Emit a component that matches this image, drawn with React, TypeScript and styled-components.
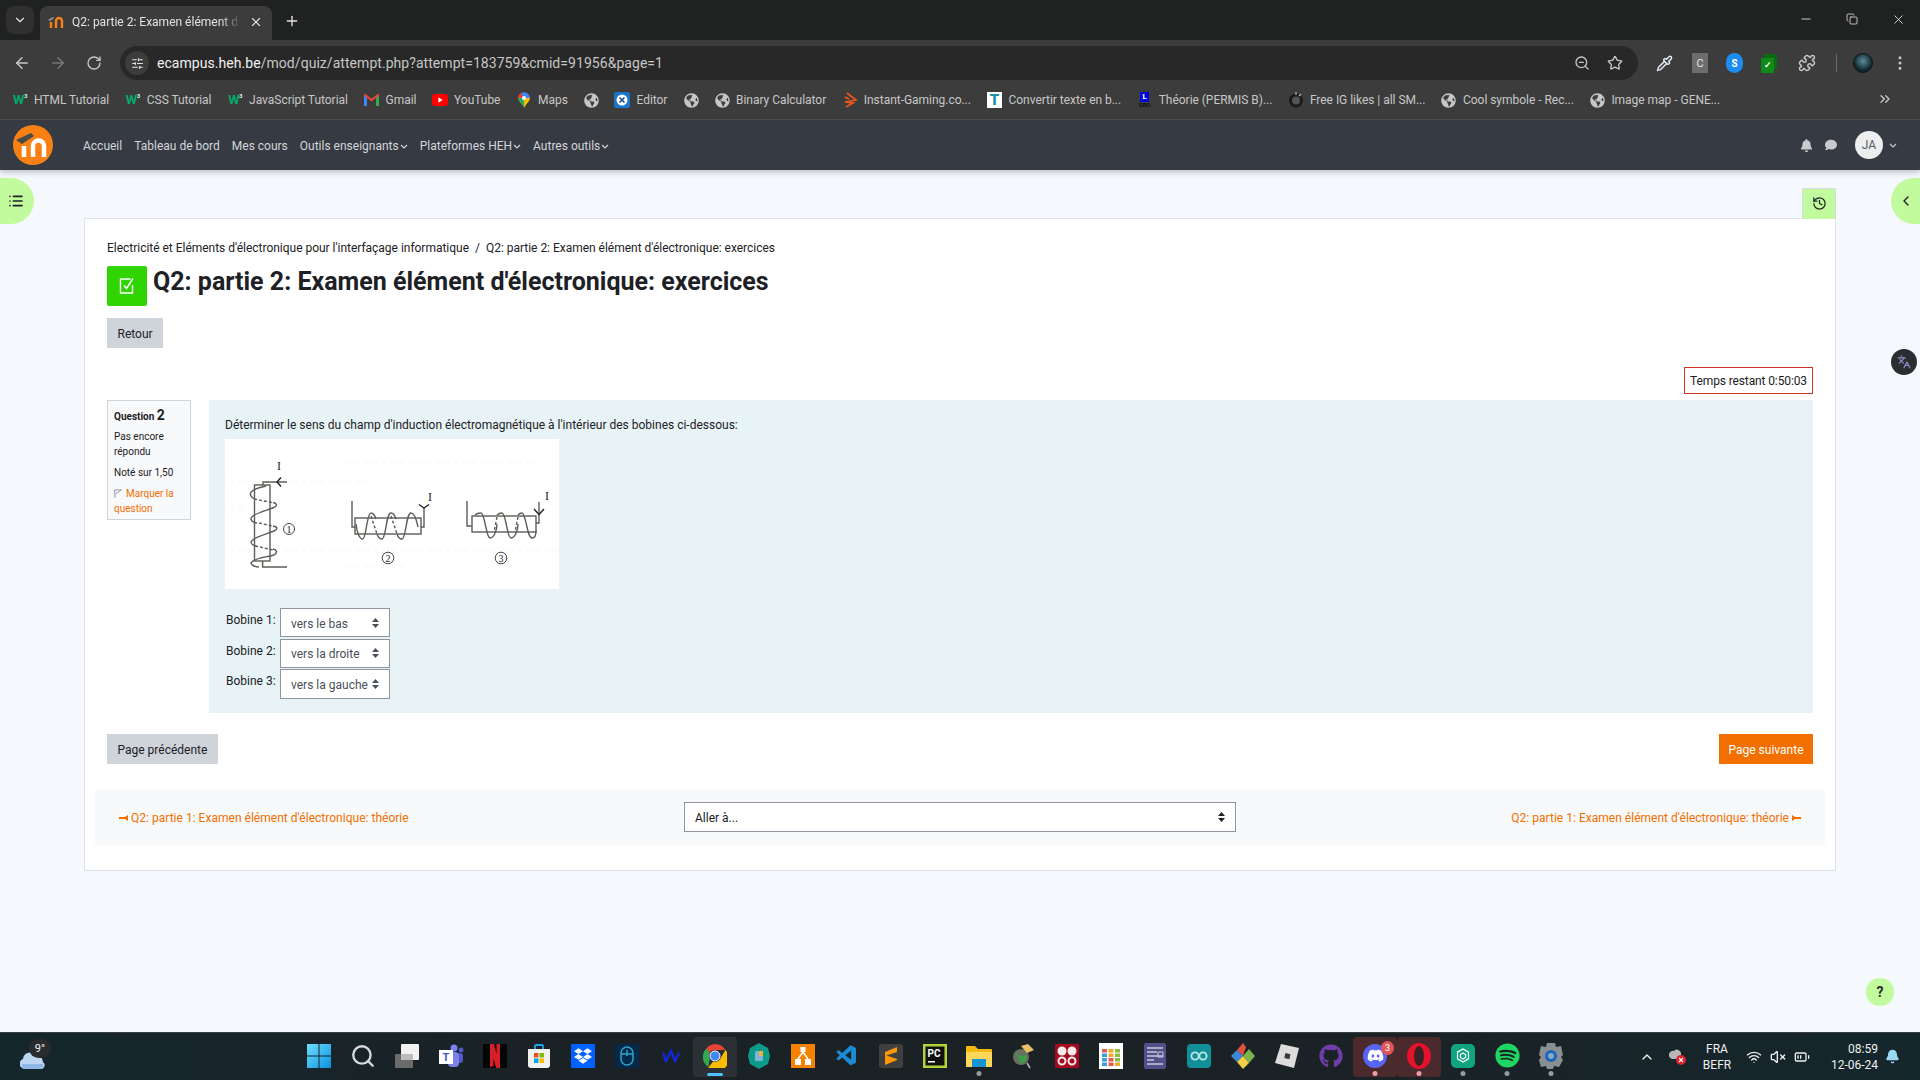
// App.tsx
import React from 'react';
import styled, { createGlobalStyle } from 'styled-components';
import {
  FaDiscord,
  FaGithub,
  FaGlobeAmericas,
  FaSpotify,
  FaDropbox,
  FaBell,
  FaComment,
} from 'react-icons/fa';
import { VscVscode } from 'react-icons/vsc';
import {
  ArrowLeft,
  ArrowRight,
  RotateCw,
  ChevronDown,
  ChevronLeft,
  Plus,
  X,
  Minus,
  Search,
  ZoomOut,
  Star,
  EllipsisVertical,
  ChevronsRight,
  ChevronUp,
  History,
  Wifi,
  VolumeX,
  BatteryMedium,
  Bell,
  Copy,
  Puzzle,
  Pipette,
  SlidersHorizontal,
  Languages,
  List,
} from 'lucide-react';

const GlobalStyle = createGlobalStyle`
  html, body { margin: 0; padding: 0; }
  body {
    font-family: Roboto, "Liberation Sans", sans-serif;
    font-size: 12px;
    color: #1d2125;
    background: #f5f8fc;
  }
  * { box-sizing: border-box; }
`;

const Screen = styled.div`
  width: 1920px;
  height: 1080px;
  display: flex;
  flex-direction: column;
  overflow: hidden;
  position: relative;
`;

/* ---------- browser chrome ---------- */
const TabStrip = styled.div`
  height: 40px;
  flex: none;
  background: #202221;
  display: flex;
  align-items: flex-end;
  padding-left: 6px;
  color: #e3e3e3;
`;
const TabMenu = styled.div`
  width: 28px;
  height: 28px;
  margin-bottom: 6px;
  border-radius: 8px;
  background: #2f302f;
  display: flex;
  align-items: center;
  justify-content: center;
`;
const Tab = styled.div`
  width: 232px;
  height: 34px;
  margin-left: 6px;
  border-radius: 8px 8px 0 0;
  background: #3c3c3c;
  display: flex;
  align-items: center;
  padding: 0 9px 3px 8px;
  gap: 8px;
`;
const TabTitle = styled.span`
  flex: 1;
  white-space: nowrap;
  font-size: 12px;
  -webkit-mask-image: linear-gradient(to right, #000 88%, transparent);
  mask-image: linear-gradient(to right, #000 88%, transparent);
`;
const NewTab = styled.div`
  margin: 0 0 11px 12px;
  display: flex;
`;
const WindowControls = styled.div`
  margin-left: auto;
  height: 40px;
  display: flex;
  align-items: center;
  gap: 33px;
  padding-right: 14px;
  padding-bottom: 2px;
`;

const Toolbar = styled.div`
  height: 47px;
  flex: none;
  background: #3c3c3c;
  display: flex;
  align-items: flex-start;
  padding-top: 6px;
  color: #c7c7c7;
`;
const NavButtons = styled.div`
  width: 120px;
  height: 34px;
  flex: none;
  display: flex;
  align-items: center;
  padding-left: 13px;
  gap: 18px;
`;
const Reload = styled(RotateCw)`
  margin-left: 1px;
`;
const Omnibox = styled.div`
  width: 1518px;
  height: 34px;
  flex: none;
  border-radius: 17px;
  background: #282828;
  display: flex;
  align-items: center;
  padding: 0 15px 0 5px;
`;
const SiteInfo = styled.div`
  width: 24px;
  height: 24px;
  border-radius: 50%;
  background: #3c3c3c;
  display: flex;
  align-items: center;
  justify-content: center;
  margin-right: 8px;
`;
const Url = styled.div`
  flex: 1;
  font-size: 14px;
  letter-spacing: 0.05px;
  color: #c4c7c5;
  b {
    font-weight: 400;
    color: #f1f1f1;
  }
`;
const OmniActions = styled.div`
  display: flex;
  align-items: center;
  gap: 17px;
`;
const Extensions = styled.div`
  flex: 1;
  height: 34px;
  display: flex;
  align-items: center;
  padding-left: 18px;
  gap: 18px;
`;
const ToolbarDivider = styled.div`
  width: 1px;
  height: 18px;
  background: #6a6a6a;
  margin: 0 -2px 0 2px;
`;
const GrayChip = styled.div`
  width: 16px;
  height: 20px;
  margin-left: 1px;
  background: #6d6d6d;
  color: #e5e5e5;
  font-size: 11px;
  display: flex;
  align-items: center;
  justify-content: center;
  border-radius: 1px;
`;
const ShieldBadge = styled.div`
  width: 17px;
  height: 20px;
  border-radius: 9px;
  background: #1d8cf0;
  color: #fff;
  font-size: 10px;
  font-weight: 700;
  display: flex;
  align-items: center;
  justify-content: center;
`;
const CheckBadge = styled.div`
  width: 13px;
  height: 15px;
  margin: 4px 3px 0 0;
  background: #0e8a16;
  color: #fff;
  font-size: 9px;
  font-weight: 700;
  display: flex;
  align-items: center;
  justify-content: center;
  box-shadow: 3px -4px 0 #0b6b12;
`;
const ExtensionsPuzzle = styled(Puzzle)`
  margin-left: 3px;
`;
const ProfileDot = styled.div`
  width: 20px;
  height: 20px;
  border-radius: 50%;
  background: radial-gradient(circle at 50% 40%, #5d8b98, #10262c 65%);
  border: 1px solid #0c1315;
`;

const Bookmarks = styled.div`
  height: 33px;
  flex: none;
  background: #3c3c3c;
  border-bottom: 1px solid #4b4b4b;
  display: flex;
  align-items: flex-start;
  padding: 5px 0 0 12px;
  color: #c7c7c7;
  position: relative;
`;
const Bookmark = styled.div<{ $gap?: number }>`
  display: flex;
  align-items: center;
  gap: 6px;
  height: 16px;
  margin-right: ${(p) => p.$gap ?? 15.6}px;
  white-space: nowrap;
  font-size: 12px;
  letter-spacing: -0.03px;
  line-height: 16px;
`;
const BookmarkIcon = styled.span`
  width: 16px;
  height: 16px;
  flex: none;
  display: flex;
  align-items: center;
  justify-content: center;
`;
const W3 = styled.span`
  color: #04aa6d;
  font-weight: 700;
  font-size: 13px;
  letter-spacing: -0.5px;
  sup {
    font-size: 6px;
    color: #cfe;
    vertical-align: 6px;
    line-height: 0;
  }
`;
const Overflow = styled.div`
  position: absolute;
  left: 1877px;
  top: 4px;
`;
const SquareT = styled.span`
  width: 15px;
  height: 16px;
  background: #fff;
  color: #1d90a8;
  font-size: 15px;
  font-weight: 900;
  line-height: 16px;
  text-align: center;
`;
const Permis = styled.span`
  display: flex;
  flex-direction: column;
  align-items: center;
  line-height: 1;
  i {
    width: 9px;
    height: 10px;
    background: #0000dc;
    color: #fff;
    font: 700 8px/10px Roboto, sans-serif;
    text-align: center;
  }
  u {
    text-decoration: none;
    color: #111;
    font: 700 6px/6px Roboto, sans-serif;
  }
`;

/* ---------- moodle nav ---------- */
const MoodleBar = styled.div`
  height: 50px;
  flex: none;
  background: #353a43;
  box-shadow: 0 2px 6px rgba(60, 70, 90, 0.35);
  display: flex;
  align-items: center;
  padding: 0 23px 0 13px;
  color: #d4d6d9;
  position: relative;
  z-index: 2;
`;
const NavLinks = styled.nav`
  display: flex;
  gap: 12px;
  margin-left: 30px;
  padding-top: 2px;
  font-size: 12px;
`;
const NavLink = styled.span`
  display: inline-flex;
  align-items: center;
  gap: 1px;
`;
const NavRight = styled.div`
  margin-left: auto;
  display: flex;
  align-items: center;
  color: #c8cacd;
`;
const ChatIcon = styled(FaComment)`
  margin-left: 12px;
`;
const Avatar = styled.div`
  width: 28px;
  height: 28px;
  border-radius: 50%;
  background: #eceef0;
  color: #555b63;
  font-size: 12px;
  display: flex;
  align-items: center;
  justify-content: center;
  margin: 0 6px 0 18px;
`;

/* ---------- page ---------- */
const Page = styled.main`
  flex: 1;
  background: #f5f8fc;
  padding: 48px 84px 0;
  position: relative;
`;
const Pill = styled.div<{ $side: 'left' | 'right' }>`
  position: absolute;
  top: 8px;
  ${(p) => p.$side}: 0;
  width: ${(p) => (p.$side === 'left' ? 34 : 29)}px;
  height: 46px;
  background: #c2fa9e;
  border-radius: ${(p) => (p.$side === 'left' ? '0 23px 23px 0' : '23px 0 0 23px')};
  display: flex;
  align-items: center;
  justify-content: center;
  color: #1d2125;
  padding-right: ${(p) => (p.$side === 'left' ? 3 : 0)}px;
`;
const HistoryTab = styled.div`
  position: absolute;
  top: 18px;
  left: 1802px;
  width: 34px;
  height: 31px;
  background: #c2fa9e;
  border: 1px solid #d5dae1;
  border-bottom: 0;
  padding-bottom: 2px;
  display: flex;
  align-items: center;
  justify-content: center;
  color: #1d2125;
`;
const TranslateBadge = styled.div`
  position: absolute;
  left: 1891px;
  top: 179px;
  width: 26px;
  height: 26px;
  border-radius: 50%;
  background: #2c2d30;
  color: #8c90c8;
  display: flex;
  align-items: center;
  justify-content: center;
`;
const HelpButton = styled.div`
  position: absolute;
  left: 1866px;
  top: 808px;
  width: 28px;
  height: 28px;
  border-radius: 50%;
  background: #c2fa9e;
  color: #2c2c2c;
  font-size: 14px;
  font-weight: 700;
  display: flex;
  align-items: center;
  justify-content: center;
`;
const Card = styled.section`
  background: #fff;
  border: 1px solid #dee2e6;
  padding: 19px 22px 24px;
  height: 653px;
`;
const Crumbs = styled.div`
  display: flex;
  gap: 6px;
  line-height: 20px;
  font-size: 12px;
  letter-spacing: -0.02px;
  color: #1d2125;
`;
const TitleRow = styled.div`
  display: flex;
  gap: 6px;
  align-items: flex-start;
  margin-top: 8px;
`;
const ActivityIcon = styled.div`
  width: 40px;
  height: 40px;
  border-radius: 2px;
  background: #30d400;
  color: #fff;
  display: flex;
  align-items: center;
  justify-content: center;
`;
const Title = styled.h1`
  margin: 0;
  font-size: 25px;
  line-height: 32px;
  font-weight: 700;
  color: #1d2125;
`;
const Button = styled.div<{ $primary?: boolean }>`
  height: 30px;
  display: inline-flex;
  align-items: center;
  padding: 1px ${(p) => (p.$primary ? 9.5 : 10.5)}px 0;
  font-size: 12px;
  background: ${(p) => (p.$primary ? '#f26f00' : '#ced4da')};
  color: ${(p) => (p.$primary ? '#fff' : '#1d2125')};
`;
const BackRow = styled.div`
  margin-top: 12px;
  display: flex;
`;
const TimerRow = styled.div`
  display: flex;
  justify-content: flex-end;
  margin-top: 19px;
`;
const Timer = styled.div`
  height: 27px;
  width: 129px;
  border: 1px solid #ca3120;
  display: flex;
  align-items: center;
  justify-content: center;
  font-size: 12px;
  letter-spacing: -0.12px;
`;
const QuestionRow = styled.div`
  display: flex;
  gap: 18px;
  margin-top: 6px;
  align-items: flex-start;
`;
const Info = styled.aside`
  width: 84px;
  flex: none;
  height: 120px;
  background: #f8f9fa;
  border: 1px solid #ced4da;
  padding: 5px 6px;
  font-size: 10px;
  line-height: 15px;
  p {
    margin: 0 0 6px;
  }
`;
const QuestionNo = styled.div`
  font-weight: 700;
  font-size: 10px;
  line-height: 18px;
  margin-bottom: 3px;
  span {
    font-size: 14px;
  }
`;
const FlagLink = styled.div`
  color: #f26f00;
  svg {
    vertical-align: -1px;
    margin-right: 4px;
  }
`;
const Content = styled.div`
  flex: 1;
  height: 313px;
  background: #e7f3f5;
  padding: 15px 16px 14px;
`;
const QText = styled.div`
  line-height: 20px;
  font-size: 12px;
`;
const Figure = styled.div`
  margin-top: 4px;
  width: 334px;
  height: 150px;
  background: #fff;
  svg {
    display: block;
  }
`;
const Answers = styled.div`
  margin-top: 19px;
  display: flex;
  flex-direction: column;
  gap: 1.5px;
`;
const AnswerRow = styled.div`
  display: flex;
  align-items: flex-start;
  gap: 4px;
  padding-left: 1px;
`;
const AnswerLabel = styled.span`
  line-height: 24px;
  width: 50px;
  font-size: 12px;
`;
const SelectBox = styled.div<{ $width: number; $height: number }>`
  width: ${(p) => p.$width}px;
  height: ${(p) => p.$height}px;
  background: #fff;
  border: 1px solid #8f959e;
  color: #495057;
  font-size: 12px;
  display: flex;
  align-items: center;
  justify-content: space-between;
  padding: 2px 10px 0;
`;
const Caret = styled.svg`
  flex: none;
  margin-top: -2px;
`;
const PageButtons = styled.div`
  display: flex;
  justify-content: space-between;
  margin-top: 21px;
`;
const ActivityNav = styled.div`
  margin: 25px -12px 0;
  height: 56px;
  background: #f8f9fa;
  display: flex;
  align-items: center;
  justify-content: space-between;
  padding: 0 24px;
`;
const ActivityLink = styled.span<{ $end?: boolean }>`
  color: #f26f00;
  font-size: 12px;
  letter-spacing: 0.02px;
  display: inline-flex;
  align-items: center;
  justify-content: ${(p) => (p.$end ? 'flex-end' : 'flex-start')};
  gap: 3px;
  width: 320px;
  padding-top: 1px;
  white-space: nowrap;
`;
const JumpBox = styled(SelectBox)`
  color: #1d2125;
`;

/* ---------- taskbar ---------- */
const Taskbar = styled.footer`
  height: 48px;
  flex: none;
  background: linear-gradient(90deg, #14272c 0%, #1b2226 30%, #1b2226 70%, #14272c 100%);
  border-top: 1px solid #3a3f42;
  display: flex;
  align-items: center;
  color: #f0f0f0;
`;
const Weather = styled.div`
  width: 297px;
  flex: none;
  height: 100%;
  position: relative;
  padding: 14px 0 0 20px;
`;
const WeatherBadge = styled.span`
  position: absolute;
  left: 29px;
  top: 6px;
  width: 22px;
  height: 19px;
  border-radius: 10px;
  background: #2a2b2c;
  font-size: 11px;
  text-align: center;
  line-height: 19px;
`;
const Apps = styled.div`
  display: flex;
  height: 100%;
  align-items: center;
`;
const AppCell = styled.div<{ $bg?: string; $dot?: string; $bar?: boolean }>`
  width: 44px;
  height: 40px;
  flex: none;
  border-radius: 4px;
  position: relative;
  display: flex;
  align-items: center;
  justify-content: center;
  padding-bottom: 2px;
  background: ${(p) => p.$bg ?? 'transparent'};
  &::after {
    content: '';
    display: ${(p) => (p.$dot || p.$bar ? 'block' : 'none')};
    position: absolute;
    bottom: 1px;
    left: 50%;
    transform: translateX(-50%);
    width: ${(p) => (p.$bar ? 16 : 5)}px;
    height: ${(p) => (p.$bar ? 3 : 5)}px;
    border-radius: 3px;
    background: ${(p) => p.$dot ?? '#4cc2ff'};
  }
`;
const DiscordCount = styled.span`
  position: absolute;
  top: 4px;
  right: 3px;
  width: 13px;
  height: 14px;
  border-radius: 50%;
  background: #e0555a;
  color: #fff;
  font-size: 9px;
  text-align: center;
  line-height: 14px;
`;
const Tile = styled.div<{ $bg: string; $color?: string; $radius?: number }>`
  width: 24px;
  height: 24px;
  background: ${(p) => p.$bg};
  color: ${(p) => p.$color ?? '#fff'};
  border-radius: ${(p) => p.$radius ?? 0}px;
  display: flex;
  align-items: center;
  justify-content: center;
  font-size: 11px;
  font-weight: 700;
`;
const Tray = styled.div`
  margin-left: auto;
  height: 100%;
  display: flex;
  align-items: center;
  padding-right: 20px;
  font-size: 12px;
  position: relative;
`;
const TrayStack = styled.div<{ $align: string; $width: number; $ml: number }>`
  display: flex;
  flex-direction: column;
  align-items: ${(p) => p.$align};
  width: ${(p) => p.$width}px;
  margin-left: ${(p) => p.$ml}px;
  line-height: 16px;
  font-size: 12px;
`;
const TrayIcons = styled.div`
  display: flex;
  align-items: center;
  gap: 8px;
  margin-left: 14px;
`;
const NotifyBell = styled(Bell)`
  margin-left: 7px;
`;

/* ---------- drawings ---------- */
const MoodleLogo = ({ size = 40 }: { size?: number }) => (
  <svg width={size} height={size} viewBox="0 0 40 40">
    <circle cx="20" cy="20" r="20" fill="#f98012" />
    <path d="M11 32V21M20 32V21a5.500 5.500 0 0 1 11 0v11" fill="none" stroke="#fff" strokeWidth="4.5" />
    <path d="M3 15l15-7 3 3-12 8z" fill="#4a4a4a" />
  </svg>
);

const Favicon = () => (
  <svg width="16" height="16" viewBox="0 0 16 16">
    <path d="M3 14V8M8 14V7a3 3 0 0 1 6 0v7" fill="none" stroke="#f98012" strokeWidth="2.4" />
    <path d="M0 6l5-3 1 1-4 3z" fill="#999" />
  </svg>
);

const QuizMark = () => (
  <svg width="18" height="18" viewBox="0 0 18 18" fill="none" stroke="#fff" strokeWidth="1.4">
    <path d="M12.500 2H2.500v14h12V8" />
    <path d="M6 8.500l2.500 3L15 1.500" />
  </svg>
);

const Gmail = () => (
  <svg width="15" height="12" viewBox="0 0 15 12">
    <path d="M0 12V1.5L3 3v9z" fill="#4285f4" />
    <path d="M15 12V1.5L12 3v9z" fill="#34a853" />
    <path d="M0 1.5l7.5 6 7.5-6V0l-1.5 0L7.5 4.8 1.5 0 0 0z" fill="#ea4335" />
  </svg>
);
const YouTube = () => (
  <svg width="16" height="12" viewBox="0 0 16 12">
    <rect width="16" height="12" rx="3" fill="#f00" />
    <path d="M6.4 3.3l4.2 2.7-4.2 2.7z" fill="#fff" />
  </svg>
);
const MapsPin = () => (
  <svg width="12" height="16" viewBox="0 0 12 16">
    <path d="M6 16C4 12 0 9 0 6h6z" fill="#34a853" />
    <path d="M6 16c2-4 6-7 6-10H6z" fill="#fbbc04" />
    <path d="M0 6a6 6 0 0 1 3-5l3 5z" fill="#ea4335" />
    <path d="M3 1a6 6 0 0 1 9 5H6z" fill="#4285f4" />
    <circle cx="6" cy="6" r="2" fill="#fff" />
  </svg>
);
const EditorIcon = () => (
  <svg width="16" height="16" viewBox="0 0 16 16">
    <rect width="16" height="16" rx="2" fill="#1977c9" />
    <circle cx="8" cy="8" r="5.5" fill="#fff" />
    <path d="M5.5 5.5l5 5M10.5 5.5l-5 5" stroke="#1a4f8a" strokeWidth="1.6" />
  </svg>
);
const InstantIcon = () => (
  <svg width="16" height="16" viewBox="0 0 16 16" fill="none" stroke="#f0561e" strokeWidth="1.6">
    <path d="M5 1l9 7-11 2 8 1-7 4" />
    <path d="M3 5l4 2" />
  </svg>
);
const DarkBadge = () => (
  <svg width="16" height="16" viewBox="0 0 16 16">
    <circle cx="8" cy="8.5" r="7" fill="#1a1a1a" />
    <circle cx="8" cy="8.5" r="4" fill="#555" />
    <path d="M8 0v3M13 2l-2 2" stroke="#bbb" strokeWidth="1.2" />
  </svg>
);

const Globe = () => <FaGlobeAmericas size={15} color="#c7c7c7" />;

const Updown = ({ color = '#495057' }: { color?: string }) => (
  <Caret width="7" height="10" viewBox="0 0 7 10" fill={color}>
    <path d="M3.5 0L7 4H0zM3.5 10L0 6h7z" />
  </Caret>
);

const Flag = () => (
  <svg width="8" height="9" viewBox="0 0 8 9" fill="none" stroke="#8a8f96" strokeWidth="0.9">
    <path d="M1 9L.6 1 7.5.8 4 3.2 1.3 5" />
  </svg>
);

const NavCaret = () => (
  <svg width="8" height="5" viewBox="0 0 8 5" fill="none" stroke="currentColor" strokeWidth="1.2">
    <path d="M1 1l3 3 3-3" />
  </svg>
);

const ArrowGlyph = styled.svg<{ $flip?: boolean }>`
  transform: ${(p) => (p.$flip ? 'scaleX(-1)' : 'none')};
`;
const NavArrow = ({ flip }: { flip?: boolean }) => (
  <ArrowGlyph $flip={flip} width="9" height="6" viewBox="0 0 9 6" fill="#f26f00">
    <path d="M9 0v6L6 4H0V2h6z" />
  </ArrowGlyph>
);

const CoilFigure = () => (
  <svg width="334" height="150" viewBox="0 0 334 150" fill="none" stroke="#5c5c58" strokeWidth="1.4">
    {/* scan show-through */}
    <g stroke="#fcfcfb" strokeWidth="5" strokeDasharray="6 3">
      <path d="M120 24h190M4 42h140M4 70h20M4 112h330M120 128h60" />
    </g>
    {/* coil 1 */}
    <rect x="29.5" y="46" width="15.5" height="76" />
    <path d="M38 46v-3h24" />
    <path d="M56 38.500l-4 4.500 4 4.500" stroke="#222" />
    <path d="M37.6 122v6H62" strokeWidth="1.5" />
    <path d="M41 47C32 49 23 52 26 57c1 2 3 3 6 3.5M48 63.500c4 1 5 3 1 5-7 3-22 6-23 11 0 2 2 4 6 4.500M48 87c5 1 5 3 1 5-7 3-21 6-23 11 0 2 3 4 7 4.500M48 110c4 1 5 3 1 6-6 2-21 3-23 8 0 2 4 4 8 4" />
    <path d="M34 61l13 2.500M34 84l13 3M35 108l13 3" strokeDasharray="3 2" />
    {/* coil 2 */}
    <rect x="130" y="79" width="66" height="16" />
    <path d="M127 62v26h3M196 88h3V68" />
    <path d="M194 65.500l5 3.500 5-3.500" stroke="#222" />
    <path d="M131 85c1 10 4 15 6.500 15 4 0 4-26 8.500-26 2 0 4 3 5 6M152 95c1 3 3 5 5 5 4 0 4-26 9-26 2 0 4 3 5 6M172 95c1 3 3 5 5 5 4 0 4-26 9-26 3 0 5 4 7 14" />
    <path d="M146 77l6 18M166 77l6 18" strokeDasharray="3 2" />
    {/* coil 3 */}
    <rect x="247" y="77" width="64" height="16" />
    <path d="M242 62v25h5M311 84h3V63" />
    <path d="M309 70l5 5.500 5-5.500" stroke="#222" />
    <path d="M250 76c2-2 4-2 6-2 4 0 5 25 9 25 4 0 7-8 7-14M272 76c1-1 3-2 5-2 4 0 5 25 9 25 4 0 7-8 7-14M293 76c1-1 2-2 4-2 4 0 5 25 10 25 3 0 4-4 4-7" />
    <path d="M272 78l-3 15M293 78l-3 15" strokeDasharray="3 2" />
    {/* circled numbers and current labels */}
    <g fill="#222" stroke="none" fontFamily="'Liberation Serif', serif" textAnchor="middle">
      <text x="54" y="31" fontSize="12">I</text>
      <text x="205" y="62" fontSize="12">I</text>
      <text x="322" y="61" fontSize="12">I</text>
      <text x="64" y="93.500" fontSize="10">1</text>
      <text x="163" y="122.500" fontSize="10">2</text>
      <text x="276" y="122.500" fontSize="10">3</text>
    </g>
    <g stroke="#333" strokeWidth="0.9">
      <circle cx="64" cy="90" r="5.5" />
      <circle cx="163" cy="119" r="5.8" />
      <circle cx="276" cy="119" r="5.8" />
    </g>
  </svg>
);

const WindowsLogo = () => (
  <svg width="24" height="24" viewBox="0 0 24 24">
    <defs>
      <linearGradient id="win" x1="0" y1="0" x2="1" y2="1">
        <stop offset="0" stopColor="#6fe0ff" />
        <stop offset="1" stopColor="#0a8fe0" />
      </linearGradient>
    </defs>
    <path d="M0 0h11.500v11.500H0zM12.500 0H24v11.500H12.500zM0 12.500h11.500V24H0zM12.500 12.500H24V24H12.500z" fill="url(#win)" />
  </svg>
);
const TaskView = () => (
  <svg width="24" height="24" viewBox="0 0 24 24">
    <rect x="0" y="10" width="18" height="14" rx="1" fill="#6b6b6b" />
    <rect x="6" y="0" width="18" height="16" rx="1" fill="#f2f2f2" />
    <rect x="6" y="10" width="12" height="6" fill="#bdbdbd" />
  </svg>
);
const Teams = () => (
  <svg width="26" height="24" viewBox="0 0 26 24">
    <circle cx="16" cy="4" r="3.500" fill="#7b83eb" />
    <circle cx="23" cy="6" r="2.500" fill="#5059c9" />
    <rect x="18" y="9" width="7" height="10" rx="3" fill="#5059c9" />
    <rect x="10" y="8" width="11" height="15" rx="4" fill="#7b83eb" />
    <rect x="1" y="6" width="14" height="14" fill="#fff" />
    <text x="8" y="17" textAnchor="middle" fontSize="11" fontWeight="700" fill="#4b53bc" fontFamily="Roboto, sans-serif">T</text>
  </svg>
);
const Netflix = () => (
  <svg width="24" height="24" viewBox="0 0 24 24">
    <rect width="24" height="24" fill="#050505" />
    <path d="M7 0h4l6 24h-4zM7 0h3.500v22L7 23zM13.500 0H17v23l-3.500-1z" fill="#d81f26" />
  </svg>
);
const Store = () => (
  <svg width="24" height="24" viewBox="0 0 24 24">
    <path d="M8 5V2a1 1 0 0 1 1-1h6a1 1 0 0 1 1 1v3" fill="none" stroke="#1fa8e8" strokeWidth="1.800" />
    <path d="M1 5h22v16a3 3 0 0 1-3 3H4a3 3 0 0 1-3-3z" fill="#f1f1f1" />
    <rect x="7" y="9" width="4.500" height="4.500" fill="#f25022" />
    <rect x="12.500" y="9" width="4.500" height="4.500" fill="#7fba00" />
    <rect x="7" y="14.500" width="4.500" height="4.500" fill="#00a4ef" />
    <rect x="12.500" y="14.500" width="4.500" height="4.500" fill="#ffb900" />
  </svg>
);
const MouseApp = () => (
  <Tile $bg="#06284a" $color="#2aa6c8">
    <svg width="14" height="20" viewBox="0 0 14 20" fill="none" stroke="currentColor" strokeWidth="1.500">
      <rect x="1" y="1" width="12" height="18" rx="6" />
      <path d="M1 8h12M7 4v6" />
    </svg>
  </Tile>
);
const AltiumMark = () => (
  <svg width="18" height="14" viewBox="0 0 18 14" fill="none" stroke="#1228d8" strokeWidth="2.400">
    <path d="M1 4l3 8 5-10 4 10 4-8" />
  </svg>
);
const ChromeIcon = () => (
  <svg width="24" height="24" viewBox="0 0 24 24">
    <path d="M12 0a12 12 0 0 1 10.400 6H12a6 6 0 0 0-5.200 3L3.400 4.400A12 12 0 0 1 12 0z" fill="#ea4335" />
    <path d="M3.400 4.400L6.800 9a6 6 0 0 0 0 6l-1.500 8A12 12 0 0 1 3.400 4.400z" fill="#34a853" />
    <path d="M5.300 23.500L10 17.700a6 6 0 0 0 7.200-2.700l5.200-9A12 12 0 0 1 5.300 23.500z" fill="#fbbc04" />
    <circle cx="12" cy="12" r="5" fill="#4285f4" stroke="#fff" strokeWidth="1" />
  </svg>
);
const HexApp = () => (
  <svg width="22" height="26" viewBox="0 0 22 26">
    <path d="M11 0l9 5 2 8-2 8-9 5-9-5-2-8 2-8z" fill="#0c9b88" />
    <rect x="7" y="8" width="8" height="10" rx="1" fill="#7fb3d8" />
    <path d="M11 8l4 0 0 5-4 0z" fill="#f0b342" />
  </svg>
);
const OrangeApp = () => (
  <Tile $bg="#f58200">
    <svg width="18" height="20" viewBox="0 0 18 20" fill="#fff">
      <rect x="6.500" y="1" width="5" height="5" />
      <rect x="1" y="13" width="6" height="6" />
      <rect x="11" y="13" width="6" height="6" />
      <path d="M9 6L4 13M9 6l5 7" stroke="#fff" strokeWidth="1.500" />
    </svg>
  </Tile>
);
const Sublime = () => (
  <Tile $bg="#3f3f3f" $radius={3}>
    <svg width="14" height="20" viewBox="0 0 14 20">
      <path d="M13 1v5L1 10V6zM1 9l12 4v1L1 19v-5z" fill="#ff9800" />
    </svg>
  </Tile>
);
const PyCharm = () => (
  <svg width="24" height="24" viewBox="0 0 24 24">
    <rect width="24" height="24" fill="#b5d334" />
    <rect x="2.500" y="2.500" width="19" height="19" fill="#111" />
    <text x="11" y="13" textAnchor="middle" fontSize="10" fontWeight="700" fill="#fff" fontFamily="Roboto, sans-serif">PC</text>
    <rect x="5" y="17" width="7" height="1.500" fill="#fff" />
  </svg>
);
const Folder = () => (
  <svg width="26" height="24" viewBox="0 0 26 24">
    <path d="M0 3a1 1 0 0 1 1-1h8l3 3h13a1 1 0 0 1 1 1v17H0z" fill="#f6b912" />
    <path d="M0 8h26v15H0z" fill="#ffd75a" />
    <rect x="6" y="15" width="14" height="8" fill="#1593d8" />
  </svg>
);
const MailGlobe = () => (
  <svg width="26" height="26" viewBox="0 0 26 26">
    <circle cx="11" cy="14" r="8" fill="#6a6f62" />
    <path d="M6 10l5 3 5-1 0 6-5 3z" fill="#3aa14a" />
    <path d="M11 3l7-2 6 6-7 3z" fill="#e9bd6a" />
    <path d="M17 20l3 5" stroke="#bbb" strokeWidth="1.500" />
  </svg>
);
const RedDots = () => (
  <svg width="24" height="24" viewBox="0 0 24 24">
    <rect width="24" height="24" fill="#a40a20" />
    <g fill="#f4eceb">
      <circle cx="7" cy="7" r="4.500" />
      <circle cx="17" cy="7" r="4.500" />
    </g>
    <g fill="none" stroke="#f4eceb" strokeWidth="2">
      <circle cx="7" cy="17" r="3.500" />
      <circle cx="17" cy="17" r="3.500" />
    </g>
  </svg>
);
const ColorGrid = () => {
  const colours = ['#e6574c', '#f0a92a', '#8bbb3f', '#39a0d8', '#f0a92a', '#8bbb3f', '#39a0d8', '#e6574c', '#8bbb3f', '#39a0d8', '#e6574c', '#f0a92a'];
  return (
    <svg width="24" height="26" viewBox="0 0 24 26">
      <rect width="24" height="26" fill="#fff" />
      {colours.map((c, i) => (
        <rect key={i} x={3 + (i % 3) * 6.5} y={6 + Math.floor(i / 3) * 4.5} width="5" height="3.500" fill={c} />
      ))}
    </svg>
  );
};
const PurpleList = () => (
  <svg width="22" height="26" viewBox="0 0 22 26">
    <rect width="22" height="26" rx="2" fill="#50508a" />
    <path d="M3 5h16M3 9h10M3 13h16M3 17h7M3 21h16" stroke="#c8c6d8" strokeWidth="1.500" />
    <path d="M14 9h5v5h-5z" fill="none" stroke="#c8c6d8" />
  </svg>
);
const Arduino = () => (
  <Tile $bg="#118f98" $radius={4}>
    <svg width="18" height="10" viewBox="0 0 18 10" fill="none" stroke="#b9e6e6" strokeWidth="1.800">
      <circle cx="5" cy="5" r="3.600" />
      <circle cx="13" cy="5" r="3.600" />
    </svg>
  </Tile>
);
const Diamond = () => (
  <svg width="24" height="26" viewBox="0 0 24 26">
    <path d="M12 13L6 7l6-7 3 4z" fill="#e24f3f" />
    <path d="M12 13l6-7 6 7-6 7z" fill="#79b548" />
    <path d="M12 13l-6-6-6 6 6 6z" fill="#3d88d4" />
    <path d="M12 13l-6 6 6 7 6-6z" fill="#f4cf48" />
  </svg>
);
const Roblox = () => (
  <svg width="24" height="24" viewBox="0 0 24 24">
    <path d="M6 0l18 4-5 20L0 19z" fill="#dcdcdc" />
    <path d="M10.500 9l5 1.200-1.200 5-5-1.200z" fill="#3a3a3a" />
  </svg>
);
const Opera = () => (
  <svg width="24" height="26" viewBox="0 0 24 26">
    <ellipse cx="12" cy="13" rx="12" ry="13" fill="#e3122d" />
    <ellipse cx="12" cy="13" rx="5" ry="10" fill="#3a2123" />
  </svg>
);
const ChatGpt = () => (
  <Tile $bg="#10a37f" $radius={5}>
    <svg width="16" height="16" viewBox="0 0 16 16" fill="none" stroke="#fff" strokeWidth="1.200">
      <path d="M8 1l5.500 3.200v6.600L8 14l-5.500-3.200V4.200zM8 5l2.600 1.500v3L8 11l-2.600-1.500v-3z" />
    </svg>
  </Tile>
);
const Gear = () => (
  <svg width="24" height="26" viewBox="0 0 24 26">
    <path d="M8 0h8l1 4 5-1 2 9-2 2 2 3-4 7-5-1-1 3H8l-1-3-5 1-2-7 2-3-2-2 2-9 5 1z" fill="#8a8f93" />
    <circle cx="12" cy="13" r="6" fill="#1a66b8" />
    <circle cx="12" cy="13" r="3" fill="#86a8cc" />
  </svg>
);
const VpnCloud = () => (
  <svg width="18" height="18" viewBox="0 0 18 18">
    <path d="M3 11a4 4 0 0 1 2-8 4 4 0 0 1 7 3v5z" fill="#b7b7b7" />
    <circle cx="12" cy="12" r="5" fill="#d9222a" />
    <path d="M10 10l4 4M14 10l-4 4" stroke="#fff" strokeWidth="1.100" />
  </svg>
);
const CloudSun = () => (
  <svg width="26" height="24" viewBox="0 0 26 24">
    <path d="M2 21a5 5 0 0 1 1-9 7 7 0 0 1 13-3 6 6 0 0 1 7 6 4 4 0 0 1-1 7H4z" fill="#bcd6f2" />
    <path d="M2 17h21v2a3 3 0 0 1-3 3H5a3 3 0 0 1-3-3z" fill="#8fb6e4" />
  </svg>
);

const bookmarks: { icon: React.ReactNode; label?: string; gap?: number }[] = [
  { icon: <W3>W<sup>3</sup></W3>, label: 'HTML Tutorial' },
  { icon: <W3>W<sup>3</sup></W3>, label: 'CSS Tutorial' },
  { icon: <W3>W<sup>3</sup></W3>, label: 'JavaScript Tutorial' },
  { icon: <Gmail />, label: 'Gmail' },
  { icon: <YouTube />, label: 'YouTube' },
  { icon: <MapsPin />, label: 'Maps' },
  { icon: <Globe />, gap: 15 },
  { icon: <EditorIcon />, label: 'Editor' },
  { icon: <Globe />, gap: 15 },
  { icon: <Globe />, label: 'Binary Calculator' },
  { icon: <InstantIcon />, label: 'Instant-Gaming.co...' },
  { icon: <SquareT>T</SquareT>, label: 'Convertir texte en b...' },
  { icon: <Permis><i>L</i><u>GRO</u></Permis>, label: 'Théorie (PERMIS B)...' },
  { icon: <DarkBadge />, label: 'Free IG likes | all SM...' },
  { icon: <Globe />, label: 'Cool symbole - Rec...' },
  { icon: <Globe />, label: 'Image map - GENE...' },
];

const answers = [
  { label: 'Bobine 1:', value: 'vers le bas', height: 29 },
  { label: 'Bobine 2:', value: 'vers la droite', height: 29 },
  { label: 'Bobine 3:', value: 'vers la gauche', height: 30 },
];

export default function App() {
  return (
    <Screen>
      <GlobalStyle />
      <TabStrip>
        <TabMenu>
          <ChevronDown size={14} />
        </TabMenu>
        <Tab>
          <Favicon />
          <TabTitle>Q2: partie 2: Examen élément d</TabTitle>
          <X size={14} />
        </Tab>
        <NewTab>
          <Plus size={16} />
        </NewTab>
        <WindowControls>
          <Minus size={14} strokeWidth={1.5} />
          <Copy size={12} strokeWidth={1.6} />
          <X size={15} strokeWidth={1.4} />
        </WindowControls>
      </TabStrip>

      <Toolbar>
        <NavButtons>
          <ArrowLeft size={18} />
          <ArrowRight size={18} color="#777" />
          <Reload size={16} />
        </NavButtons>
        <Omnibox>
          <SiteInfo>
            <SlidersHorizontal size={13} color="#e3e3e3" />
          </SiteInfo>
          <Url>
            <b>ecampus.heh.be</b>/mod/quiz/attempt.php?attempt=183759&amp;cmid=91956&amp;page=1
          </Url>
          <OmniActions>
            <ZoomOut size={16} />
            <Star size={16} />
          </OmniActions>
        </Omnibox>
        <Extensions>
          <Pipette size={17} color="#e8eefc" />
          <GrayChip>C</GrayChip>
          <ShieldBadge>S</ShieldBadge>
          <CheckBadge>✓</CheckBadge>
          <ExtensionsPuzzle size={18} />
          <ToolbarDivider />
          <ProfileDot />
          <EllipsisVertical size={18} />
        </Extensions>
      </Toolbar>

      <Bookmarks>
        {bookmarks.map((b, i) => (
          <Bookmark key={i} $gap={b.gap}>
            <BookmarkIcon>{b.icon}</BookmarkIcon>
            {b.label}
          </Bookmark>
        ))}
        <Overflow>
          <ChevronsRight size={16} />
        </Overflow>
      </Bookmarks>

      <MoodleBar>
        <MoodleLogo />
        <NavLinks>
          <NavLink>Accueil</NavLink>
          <NavLink>Tableau de bord</NavLink>
          <NavLink>Mes cours</NavLink>
          <NavLink>Outils enseignants <NavCaret /></NavLink>
          <NavLink>Plateformes HEH <NavCaret /></NavLink>
          <NavLink>Autres outils <NavCaret /></NavLink>
        </NavLinks>
        <NavRight>
          <FaBell size={13} />
          <ChatIcon size={12} />
          <Avatar>JA</Avatar>
          <NavCaret />
        </NavRight>
      </MoodleBar>

      <Page>
        <Pill $side="left">
          <List size={16} strokeWidth={2.4} />
        </Pill>
        <Pill $side="right">
          <ChevronLeft size={16} />
        </Pill>
        <HistoryTab>
          <History size={15} />
        </HistoryTab>
        <TranslateBadge>
          <Languages size={14} />
        </TranslateBadge>
        <HelpButton>?</HelpButton>

        <Card>
          <Crumbs>
            <span>Electricité et Eléments d'électronique pour l'interfaçage informatique</span>
            <span>/</span>
            <span>Q2: partie 2: Examen élément d'électronique: exercices</span>
          </Crumbs>
          <TitleRow>
            <ActivityIcon>
              <QuizMark />
            </ActivityIcon>
            <Title>Q2: partie 2: Examen élément d'électronique: exercices</Title>
          </TitleRow>
          <BackRow>
            <Button>Retour</Button>
          </BackRow>
          <TimerRow>
            <Timer>Temps restant 0:50:03</Timer>
          </TimerRow>
          <QuestionRow>
            <Info>
              <QuestionNo>
                Question <span>2</span>
              </QuestionNo>
              <p>Pas encore répondu</p>
              <p>Noté sur 1,50</p>
              <FlagLink>
                <Flag />
                Marquer la question
              </FlagLink>
            </Info>
            <Content>
              <QText>Déterminer le sens du champ d'induction électromagnétique à l'intérieur des bobines ci-dessous:</QText>
              <Figure>
                <CoilFigure />
              </Figure>
              <Answers>
                {answers.map((a) => (
                  <AnswerRow key={a.label}>
                    <AnswerLabel>{a.label}</AnswerLabel>
                    <SelectBox $width={110} $height={a.height}>
                      {a.value}
                      <Updown />
                    </SelectBox>
                  </AnswerRow>
                ))}
              </Answers>
            </Content>
          </QuestionRow>
          <PageButtons>
            <Button>Page précédente</Button>
            <Button $primary>Page suivante</Button>
          </PageButtons>
          <ActivityNav>
            <ActivityLink>
              <NavArrow />
              Q2: partie 1: Examen élément d'électronique: théorie
            </ActivityLink>
            <JumpBox $width={552} $height={30}>
              Aller à...
              <Updown color="#1d2125" />
            </JumpBox>
            <ActivityLink $end>
              Q2: partie 1: Examen élément d'électronique: théorie
              <NavArrow flip />
            </ActivityLink>
          </ActivityNav>
        </Card>
      </Page>

      <Taskbar>
        <Weather>
          <CloudSun />
          <WeatherBadge>9°</WeatherBadge>
        </Weather>
        <Apps>
          <AppCell><WindowsLogo /></AppCell>
          <AppCell><Search size={26} color="#d5d8d8" strokeWidth={2.2} /></AppCell>
          <AppCell><TaskView /></AppCell>
          <AppCell><Teams /></AppCell>
          <AppCell><Netflix /></AppCell>
          <AppCell><Store /></AppCell>
          <AppCell><Tile $bg="#0061fe"><FaDropbox size={18} /></Tile></AppCell>
          <AppCell><MouseApp /></AppCell>
          <AppCell><AltiumMark /></AppCell>
          <AppCell $bg="#2b3034" $bar><ChromeIcon /></AppCell>
          <AppCell><HexApp /></AppCell>
          <AppCell><OrangeApp /></AppCell>
          <AppCell><VscVscode size={24} color="#1a8ad4" /></AppCell>
          <AppCell><Sublime /></AppCell>
          <AppCell><PyCharm /></AppCell>
          <AppCell $dot="#9a9a9a"><Folder /></AppCell>
          <AppCell><MailGlobe /></AppCell>
          <AppCell><RedDots /></AppCell>
          <AppCell><ColorGrid /></AppCell>
          <AppCell><PurpleList /></AppCell>
          <AppCell><Arduino /></AppCell>
          <AppCell><Diamond /></AppCell>
          <AppCell><Roblox /></AppCell>
          <AppCell><FaGithub size={24} color="#6e3ea8" /></AppCell>
          <AppCell $bg="#4a2a2c" $dot="#f19ca0">
            <Tile $bg="#5865f2" $radius={12}><FaDiscord size={17} /></Tile>
            <DiscordCount>3</DiscordCount>
          </AppCell>
          <AppCell $bg="#4a2a2c" $dot="#f19ca0"><Opera /></AppCell>
          <AppCell $dot="#9a9a9a"><ChatGpt /></AppCell>
          <AppCell $dot="#9a9a9a"><FaSpotify size={25} color="#1ed760" /></AppCell>
          <AppCell $dot="#9a9a9a"><Gear /></AppCell>
        </Apps>
        <Tray>
          <ChevronUp size={16} />
          <TrayIcons>
            <VpnCloud />
          </TrayIcons>
          <TrayStack $align="center" $width={30} $ml={15}>
            <span>FRA</span>
            <span>BEFR</span>
          </TrayStack>
          <TrayIcons>
            <Wifi size={16} />
            <VolumeX size={16} />
            <BatteryMedium size={16} />
          </TrayIcons>
          <TrayStack $align="flex-end" $width={54} $ml={14}>
            <span>08:59</span>
            <span>12-06-24</span>
          </TrayStack>
          <NotifyBell size={15} fill="#9bd8f5" color="#9bd8f5" />
        </Tray>
      </Taskbar>
    </Screen>
  );
}
